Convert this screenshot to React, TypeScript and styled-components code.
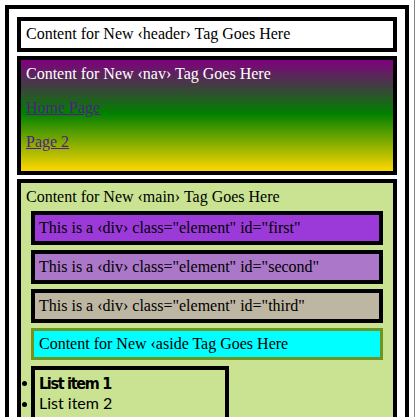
import React from "react";
import styled, { createGlobalStyle } from "styled-components";

const Global = createGlobalStyle`
  html, body { margin: 0; padding: 0; background: #ffffff; }
  body { font-family: "Liberation Serif", "Times New Roman", serif; font-size: 16px; line-height: 18px; color: #000; }
`;

const Page = styled.div`
  box-sizing: border-box;
  width: 415px;
  min-height: 417px;
  padding: 5px 5px 0 5px;
  border-right: 1px solid #858585;
`;

const Frame = styled.div`
  border: 4px solid #000;
  padding: 8px 8px 0 8px;
  display: flex;
  flex-direction: column;
  gap: 4px;
`;

const Header = styled.header`
  border: 4px solid #000;
  padding: 4px 5px 5px 5px;
`;

const Nav = styled.nav`
  border: 4px solid #000;
  padding: 5px 5px 4px 5px;
  color: #ffffff;
  background: linear-gradient(to bottom, #800080 0%, #008000 48%, #ffd700 100%);
`;

const NavPara = styled.p`
  margin: 16px 0;
`;

const NavLink = styled.a`
  color: #551a8b;
  text-decoration: underline;
`;

const Main = styled.main`
  border: 4px solid #000;
  padding: 5px 5px 0 5px;
  background: #c9e392;
`;

const Element = styled.div<{ $bg: string }>`
  margin: 5px;
  border: 4px solid #000;
  padding: 4px;
  background: ${(p) => p.$bg};
`;

const Aside = styled.aside`
  margin: 5px;
  border: 3px solid #6f9420;
  padding: 4px 5px;
  background: #00ffff;
`;

const List = styled.ul`
  width: 182px;
  margin: 6px 0 0 5px;
  padding: 4px 4px 0 4px;
  border: 4px solid #000;
  border-bottom: none;
  font-family: Lato, "Open Sans", sans-serif;
  font-size: 16px;
  line-height: 19px;
  list-style: disc outside;
`;

const Item = styled.li<{ $strong?: boolean }>`
  font-family: ${(p) =>
    p.$strong ? '"DejaVu Sans Condensed", "Liberation Sans", sans-serif' : 'Lato, "Open Sans", sans-serif'};
  font-weight: ${(p) => (p.$strong ? 700 : 400)};
  font-size: 16px;
  letter-spacing: ${(p) => (p.$strong ? "-1.3px" : "0")};
`;

export default function App() {
  return (
    <>
      <Global />
      <Page>
        <Frame>
          <Header>Content for New &lsaquo;header&rsaquo; Tag Goes Here</Header>
          <Nav>
            Content for New &lsaquo;nav&rsaquo; Tag Goes Here
            <NavPara>
              <NavLink href="#">Home Page</NavLink>
            </NavPara>
            <NavPara>
              <NavLink href="#">Page 2</NavLink>
            </NavPara>
          </Nav>
          <Main>
            Content for New &lsaquo;main&rsaquo; Tag Goes Here
            <Element $bg="#9b3ad9">This is a &lsaquo;div&rsaquo; class="element" id="first"</Element>
            <Element $bg="#ab77c9">This is a &lsaquo;div&rsaquo; class="element" id="second"</Element>
            <Element $bg="#bcb6a2">This is a &lsaquo;div&rsaquo; class="element" id="third"</Element>
            <Aside>Content for New &lsaquo;aside Tag Goes Here</Aside>
            <List>
              <Item $strong>List item 1</Item>
              <Item>List item 2</Item>
              <Item>List item 3</Item>
              <Item>List item 4</Item>
            </List>
          </Main>
        </Frame>
      </Page>
    </>
  );
}
